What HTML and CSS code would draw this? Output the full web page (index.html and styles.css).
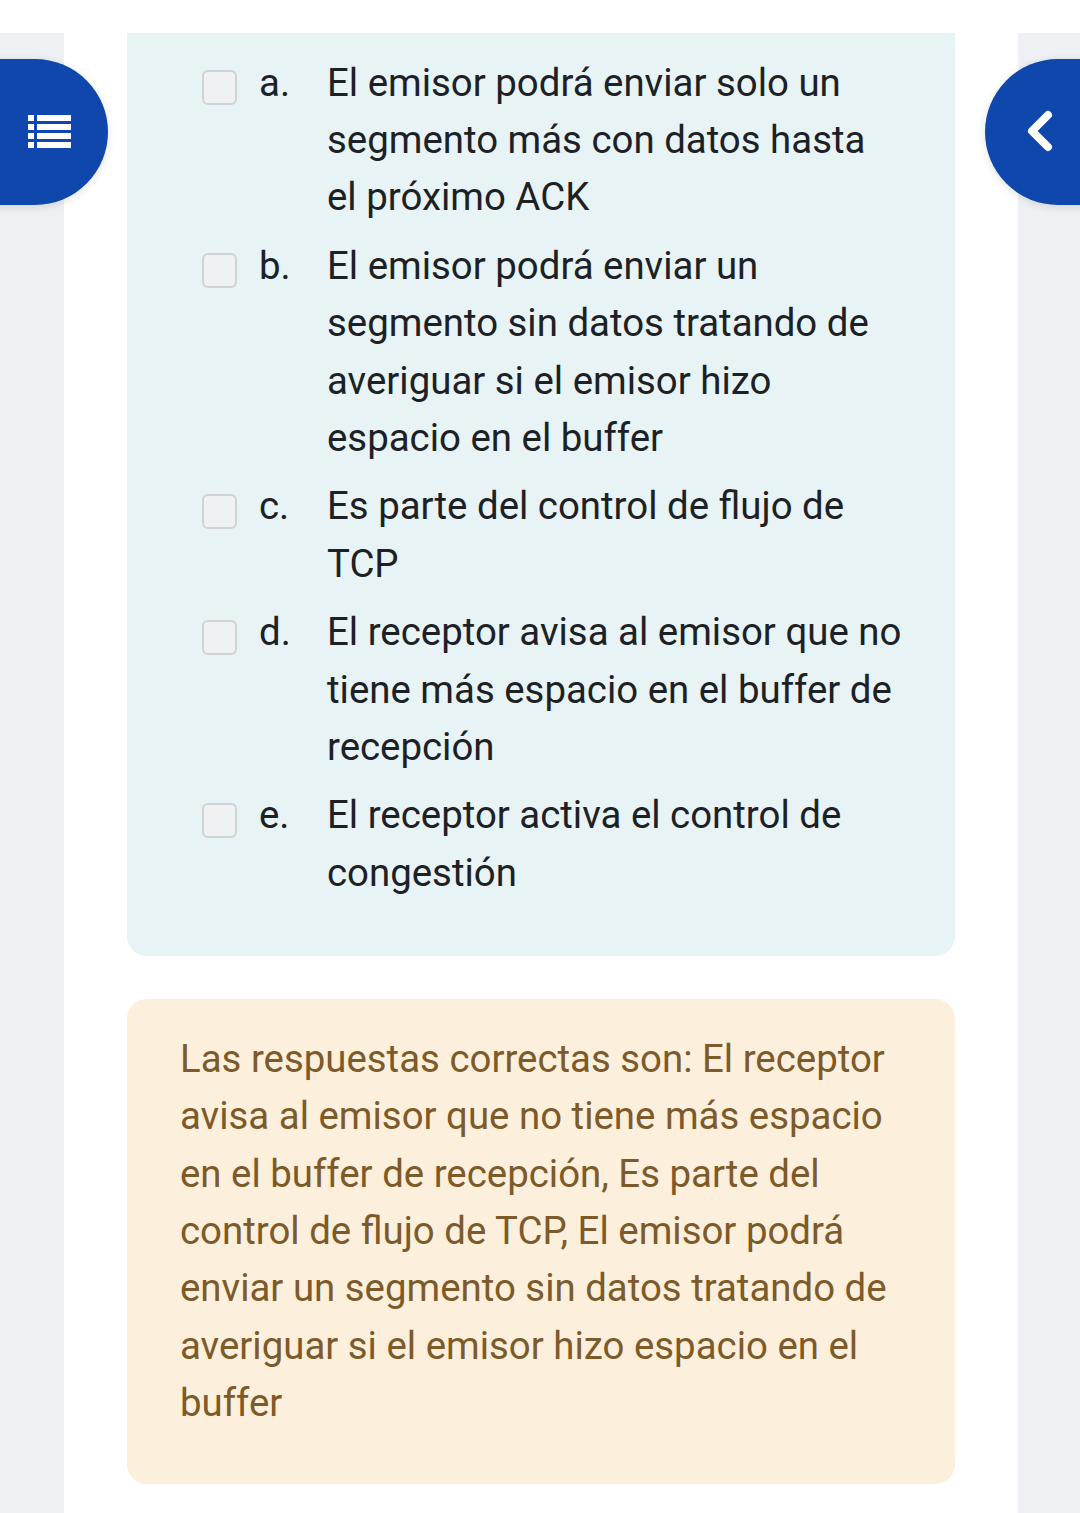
FILE: index.html
```html
<!DOCTYPE html>
<html lang="es">
<head>
<meta charset="utf-8">
<link rel="stylesheet" href="styles.css">
</head>
<body>
<div class="topband"></div>
<div class="page">
  <div class="side"></div>
  <main class="content">
    <div class="formulation">
      <div class="option">
        <span class="check"></span><span class="letter">a.</span>
        <span class="text">El emisor podrá enviar solo un segmento más con datos hasta el próximo ACK</span>
      </div>
      <div class="option">
        <span class="check"></span><span class="letter">b.</span>
        <span class="text">El emisor podrá enviar un segmento sin datos tratando de averiguar si el emisor hizo espacio en el buffer</span>
      </div>
      <div class="option">
        <span class="check"></span><span class="letter">c.</span>
        <span class="text">Es parte del control de ﬂujo de TCP</span>
      </div>
      <div class="option">
        <span class="check"></span><span class="letter">d.</span>
        <span class="text">El receptor avisa al emisor que no tiene más espacio en el buffer de recepción</span>
      </div>
      <div class="option">
        <span class="check"></span><span class="letter">e.</span>
        <span class="text">El receptor activa el control de congestión</span>
      </div>
    </div>
    <div class="outcome">Las respuestas correctas son: El receptor avisa al emisor que no tiene más espacio en el buffer de recepción, Es parte del control de ﬂujo de TCP, El emisor podrá enviar un segmento sin datos tratando de averiguar si el emisor hizo espacio en el buffer</div>
  </main>
  <div class="side"></div>
</div>

<button class="fab fab-left" aria-label="Índice">
  <svg width="43" height="34" viewBox="0 0 43 34"><g fill="#fff">
    <rect x="0" y="0" width="6" height="6"/><rect x="9" y="0" width="34" height="6"/>
    <rect x="0" y="9" width="6" height="6"/><rect x="9" y="9" width="34" height="6"/>
    <rect x="0" y="18" width="6" height="6"/><rect x="9" y="18" width="34" height="6"/>
    <rect x="0" y="27" width="6" height="6"/><rect x="9" y="27" width="34" height="6"/>
  </g></svg>
</button>
<button class="fab fab-right" aria-label="Cerrar">
  <svg width="34" height="44" viewBox="0 0 34 44"><path d="M24 5 L8 21 L24 37" fill="none" stroke="#fff" stroke-width="8" stroke-linecap="round" stroke-linejoin="round"/></svg>
</button>
</body>
</html>
```
FILE: styles.css
```css
html, body {
  margin: 0;
  padding: 0;
  background: #ffffff;
  font-family: Roboto, "Liberation Sans", sans-serif;
}
.topband {
  height: 33px;
  background: #ffffff;
}
.page {
  display: grid;
  grid-template-columns: 64px 1fr 62px;
  min-height: 1480px;
}
.side {
  background: #eff0f4;
}
.content {
  background: #ffffff;
  padding: 0 63px 40px 63px;
}
.formulation {
  background: #e7f3f5;
  border-radius: 0 0 20px 20px;
  padding: 20.5px 51px 44px 75px;
  color: #1d2125;
  font-size: 38.4px;
  line-height: 57.4px;
}
.option {
  display: flex;
  align-items: flex-start;
  margin-bottom: 11px;
}
.check {
  flex: none;
  width: 31px;
  height: 31px;
  margin-top: 16.5px;
  border: 2px solid #cfd3d6;
  border-radius: 6px;
  background: #eff1f3;
}
.letter {
  flex: none;
  width: 68px;
  margin-left: 22px;
}
.text {
  flex: 1;
}
.outcome {
  margin-top: 43px;
  background: #fcefdc;
  border-radius: 20px;
  padding: 30.5px 53px 52.5px 53px;
  color: #7d5a29;
  font-size: 38.4px;
  line-height: 57.4px;
}
.fab {
  position: absolute;
  top: 59px;
  height: 146px;
  border: none;
  background: #0f47ad;
  display: flex;
  align-items: center;
  padding: 0;
  box-shadow: 0 2px 8px rgba(0,0,0,0.12);
}
.fab-left {
  left: -40px;
  width: 148px;
  border-radius: 0 73px 73px 0;
  justify-content: flex-start;
  padding-left: 68px;
}
.fab-right {
  left: 985px;
  width: 140px;
  border-radius: 73px 0 0 73px;
  justify-content: flex-start;
  padding-left: 39px;
}
```
